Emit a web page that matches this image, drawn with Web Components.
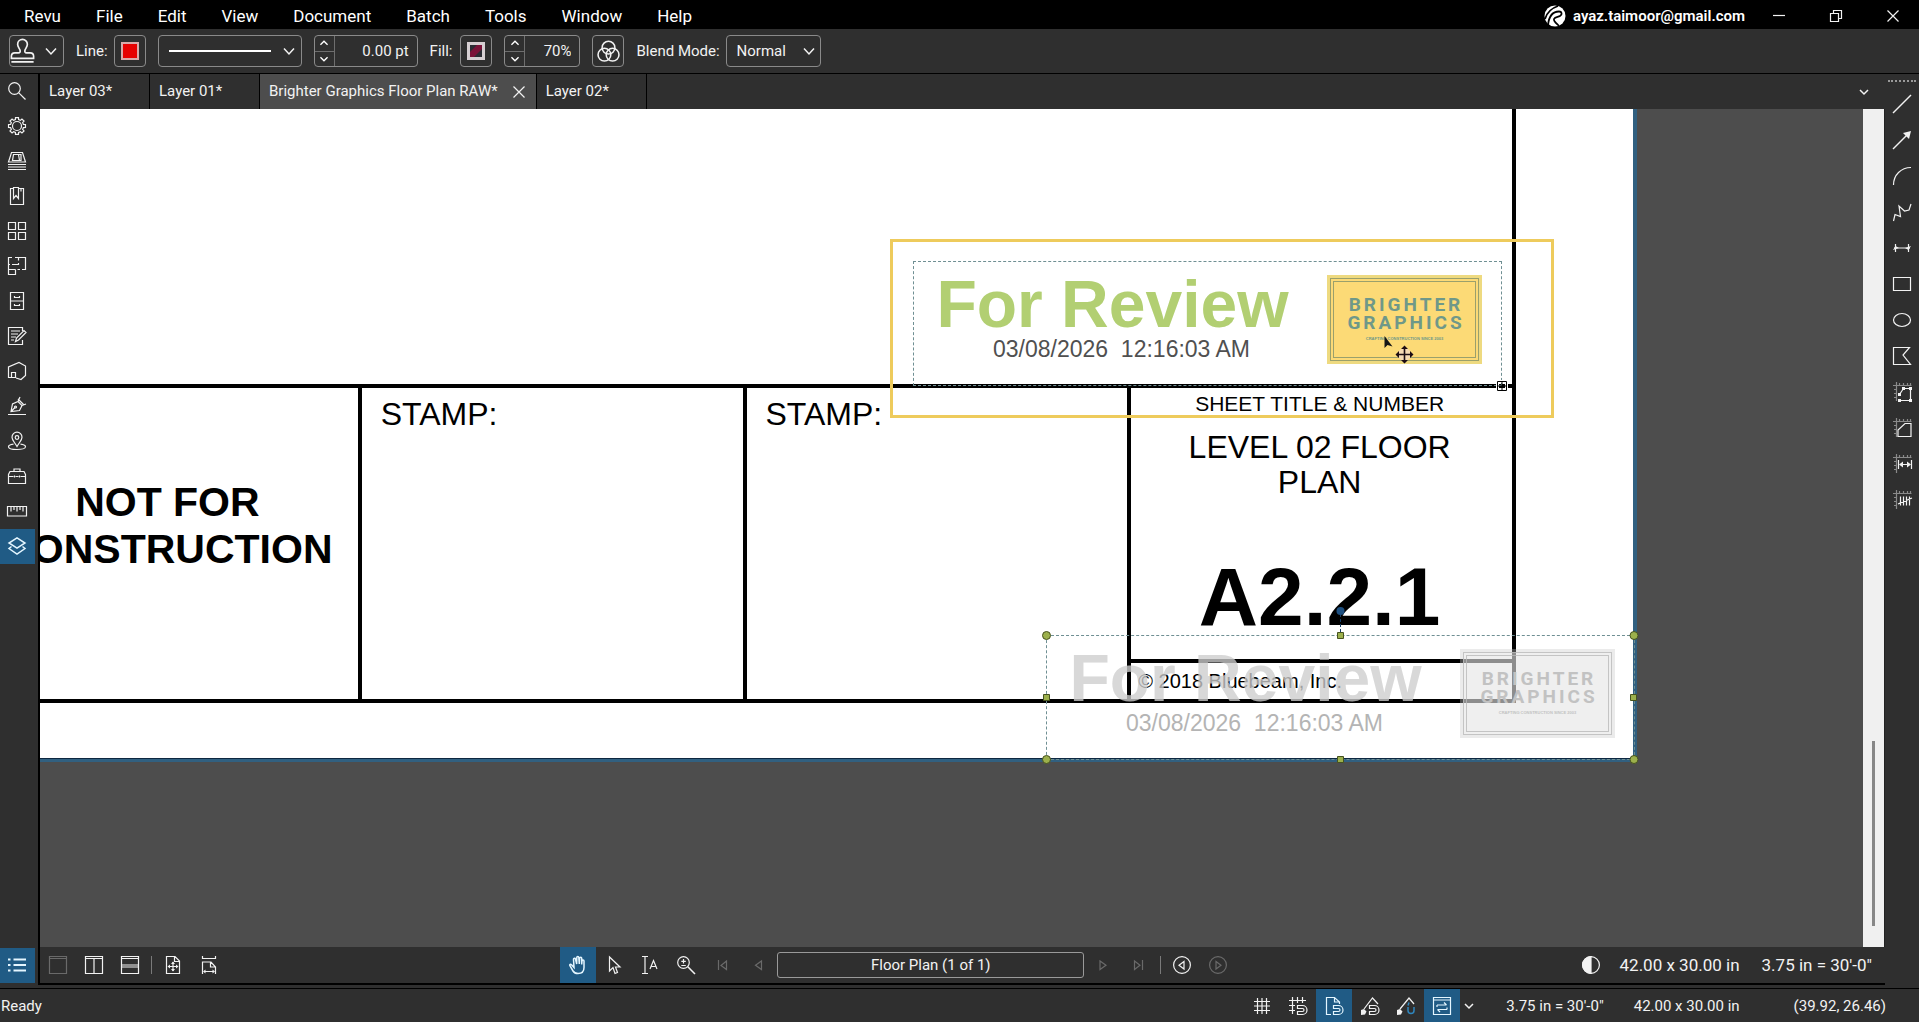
<!DOCTYPE html>
<html lang="en">
<head>
<meta charset="utf-8">
<meta name="viewport" content="width=device-width, initial-scale=1">
<title>Revu</title>
<style>
  html, body { margin: 0; height: 100%; background: #2f2f2f; }
  body { font-family: Roboto, "Liberation Sans", sans-serif; font-size: 15px; color: #f2f2f2; overflow: hidden; }
</style>
</head>
<body>
<revu-app></revu-app>
<script>
const gearPath = (() => {
  const pts = [];
  for (let i = 0; i < 8; i++) {
    const a = i * 45;
    for (const [d, r] of [[-14, 6.6], [-10, 8.6], [10, 8.6], [14, 6.6]]) {
      const t = (a + d) * Math.PI / 180;
      pts.push((9 + r * Math.sin(t)).toFixed(2) + ' ' + (9 - r * Math.cos(t)).toFixed(2));
    }
  }
  return 'M' + pts.join('L') + 'Z';
})();
const ticks = '<path stroke="#8a8a8a" d="M0 2.500h18.500M3.500 -1v19M6.500 0v2.500M10.500 0v2.500M14.500 0v2.500M17.500 0v2.500M1 6.500h2.500M1 10.500h2.500M1 14.500h2.500"/>';
const magnet = '<path d="M8.500 8.500h5a4.500 4.500 0 0 1 0 9h-5v-3h5a1.500 1.500 0 0 0 0-3h-5z"/>';

const ICONS = {
  search: '<circle cx="6.500" cy="6.500" r="5.800"/><path d="M10.800 10.800L17.500 17.500"/>',
  gear: `<path d="${gearPath}"/><circle cx="9" cy="9" r="4.500"/>`,
  thumbs: '<path d="M3.500 .5h11l3 9.500H.5zM5.500 2.500h7.500v6h-8.500zM10.500 2.500l1 6M0 12.500h18M0 15h18M0 17.500h18"/>',
  bookmark: '<path d="M6 1.500H2.500v16h13v-16H11M5.500 .5h5v11L8 8.500l-2.500 3zM13 1.500v3"/>',
  grid4: '<path d="M.5 .5h7v7h-7zM10.500 .5h7v7h-7zM.5 10.500h7v7h-7zM10.500 10.500h7v7h-7z"/>',
  plan: '<path d="M4 .5H.5v12h7M7.500 12.500v5h-7v-5M7 .5h10.500v12H14M10.500 .5v3M10.500 6v1.500H4M.5 7.500h1.500M9.500 12.500h2.500"/>',
  cabinet: '<path d="M2.500 .5h13v17h-13zM2.500 9h13M6.500 4v1.500h5V4M6.500 12v1.500h5V12"/>',
  markup: '<path d="M14.500 4V.5H.5v17h14V13M3 4h9M3 7h7M3 10h5M3 13h3M7.500 14.500l1-3.500 7.500-7.500 2 2-7.500 7.500z"/>',
  space: '<path d="M.5 14.500V5L11 .5 17.500 4v9.500L13 17.500 8 16M.5 14.500v1h7v-5h-4v5"/>',
  sign: '<path d="M0 17.500h18M3 14.500L4.500 7 10 4.500l4 4-2.500 5zM3 14.500l4-4M10 4.500L12 0M14 8.500l4-1.500M10 2l6 6"/><circle cx="7.500" cy="10" r="1"/>',
  place: '<path d="M9 14.500C6 9.500 4 8 4 5.200a5 5 0 0 1 10 0C14 8 12 9.500 9 14.500zM5.500 12.200C2.500 12.600.5 13.500.5 14.700c0 1.600 3.800 2.800 8.500 2.800s8.500-1.200 8.500-2.800c0-1.200-2-2.100-5-2.500"/><circle cx="9" cy="5.500" r="1.800"/>',
  toolbox: '<path d="M2 4.500h14l1.500 3v9H.5v-9zM6 4.500V2h6v2.500M.5 9.500h5M7.500 9.500h3M12.500 9.500h5M6.500 8.500v2M11.500 8.500v2"/>',
  ruler: '<path d="M-.5 4.500h19v9.500h-19zM3 5v4.500M6 5v3M9 5v4.500M12 5v3M15 5v4.500"/>',
  layers: '<path stroke-width="1.500" d="M9 .8l8 5.200-8 5.200L1 6zM3.500 9.500L1 11.500l8 5.700 8-5.700-2.500-2"/>',
  list: '<path stroke-width="2" d="M5.500 3.500H18M5.500 9H18M5.500 14.500H18M0 3.500h2.500M0 9h2.500M0 14.500h2.500"/>',
  line: '<path stroke-width="1.500" d="M0 18L18 0"/>',
  arrow: '<path stroke-width="1.500" d="M0 18L14 4"/><path fill="currentColor" stroke="none" d="M18 0L16 8 10 2z"/>',
  arc: '<path d="M.5 18C.5 8 8 .5 18 .5"/>',
  polyline: '<path d="M.5 18l1.500-6.500 5.500 2L6 3l5.500 5 4.500-1L18 1"/>',
  dimension: '<path d="M2.500 5v8M15.500 5v8M1 9h16"/><path fill="currentColor" stroke="none" d="M0 11l2.500-4 3.500 2zM18 7l-2.500 4-3.500-2z"/>',
  rect: '<path d="M.5 2.500h17v13H.5z"/>',
  ellipse: '<ellipse cx="9" cy="9" rx="8.500" ry="6.500"/>',
  polygon: '<path d="M.5 .5h16L10 8l7.500 9.500H.5z"/>',
  areaPoints: ticks + '<path d="M6.500 11.500L10.500 5.500h7v12H6.500"/><path fill="currentColor" stroke="none" d="M5 10h3v3H5zM9 4h3v3H9zM16 4h3v3h-3zM16 16h3v3h-3zM5 16h3v3H5z"/>',
  area: ticks + '<path d="M12 4.500h6v13H5V11z"/>',
  length: ticks + '<path d="M5.500 5v9M18.500 5v9M7 9.500h10"/><path fill="currentColor" stroke="none" d="M6 9.500l4-3v6zM18 9.500l-4-3v6z"/>',
  count: ticks + '<path d="M7.500 5.500v9M10.500 5.500v9M13.500 5.500v9M16.500 5.500v9M5 13l14-6"/>',
  single: '<path d="M.5 .5h17v17H.5zM.5 2.500h17"/>',
  splitV: '<path d="M.5 .5h17v17H.5zM.5 2.500h17M9 2.500v15"/>',
  splitH: '<path d="M.5 .5h17v17H.5zM.5 2.500h17M.5 9h17M.5 11h17"/>',
  fitPage: '<path d="M11 .5H2.500v17h13V5zM10.500 .5v5h5M4.500 10.500h9M9 6v9"/><path fill="currentColor" stroke="none" d="M3.500 10.500L6 8.500v4zM14.500 10.500l-2.500-2v4zM9 5.500l2 2.500H7zM9 15.500l2-2.500H7z"/>',
  fitWidth: '<path d="M2.500 0v2.500h13V0M2.500 18V6H11l4.500 5v7M10.500 6v5h5M4 15.500h10"/><path fill="currentColor" stroke="none" d="M3 15.500l2.500-2v4zM15 15.500l-2.500-2v4z"/>',
  hand: '<path stroke-width="1.500" d="M5 11.500L2.300 8.600c-.8-.9-2-.2-1.500.9L4 15c1 1.700 2.500 2.500 5 2.500 3.800 0 6-2.200 6-6V5c0-1.300-1.800-1.300-2 0l-.3 3.500V2.300c0-1.400-2-1.400-2.100 0L10.300 8 9.800 1.500c-.1-1.300-2-1.300-2 0L7.700 8 6.500 3c-.3-1.200-2.200-.9-2 .4z"/>',
  select: '<path d="M4.500 1v14l3.500-3.500 2 6 2.500-1-2-5.500h4.500z"/>',
  textSel: '<path d="M1 .5h6M4 .5v17M1 17.500h6M9 13l3.500-8.500L16 13M10 10.500h5"/>',
  zoom: '<circle cx="6.500" cy="6.500" r="5.800"/><path stroke-width="1.600" d="M10.800 10.800L18 18"/><path d="M6.500 3v4.500M4.300 5.300h4.500M4.300 9.500h4.500"/>',
  first: '<path d="M5.500 4v10M13.500 5v8.500l-5.500-4z"/>',
  prev: '<path d="M12.500 5v8.500l-6-4.300z"/>',
  next: '<path d="M6 5v8.500l6-4.300z"/>',
  last: '<path d="M4.500 5v8.500l5.500-4.300zM12.500 4v10"/>',
  back: '<circle cx="9" cy="9" r="8.400"/><path d="M11 5.500v7.500l-5-3.700z"/>',
  forward: '<circle cx="9" cy="9" r="8.400"/><path d="M7 5.500v7.500l5-3.700z"/>',
  contrast: '<circle cx="9" cy="9" r="8.400"/><path fill="currentColor" d="M9 .6a8.400 8.400 0 0 0 0 16.800z"/>',
  grid: '<path d="M4.500 1v16M9 1v16M13.500 1v16M1 4.500h16M1 9h16M1 13.500h16"/>',
  gridSnap: '<path d="M3.500 0v17M8.500 0v6M13.500 0v6M0 3.500h17M0 8.500h6M0 13.500h6"/>' + magnet,
  pageSnap: '<path d="M6 17.500H1.500V.5h8l5 4.500v2M9.500 .5V5h5"/>' + magnet,
  lineSnap: '<path d="M3 12L11.500 1 17 7"/><path fill="currentColor" stroke="none" d="M0 18V13l3-1 2.500 2.500-1.500 3z"/>' + magnet,
  contentSnap: '<path d="M3 12L12 1l5 6"/><path fill="currentColor" stroke="none" d="M0 18V13l3-1 2.500 2.500-1.500 3z"/><path stroke="#2f86bd" stroke-width="1.500" d="M11 10v3.500a3 3 0 0 0 6 0V10M12 5.500l-1 3"/>',
  sync: '<path d="M.5 .5h17v17H.5zM.5 3h17M4 8h9.500M11 5.500L13.500 8M14 12.500H4.500M7 15l-2.500-2.500M4 8v2M14 12.500v-2"/>',
  minimize: '<path d="M3 8.500h12"/>',
  restore: '<path d="M3.500 6.500h8v8h-8zM6.500 6V3.500h8v8H12"/>',
  close: '<path d="M3.500 3.500l11 11M14.500 3.500l-11 11"/>',
  chevron: '<path stroke-width="1.500" d="M4 6.500l5 5.500 5-5.500"/>',
  chevronSm: '<path stroke-width="1.500" d="M5 7l4 4 4-4"/>',
  stamp: '<path d="M1 12.500c0-1.500 1-2.500 2.500-2.500H6c1.200 0 1.600-1 1.200-2C6.600 6.500 5.500 5.400 5.500 3.800a3.500 3.500 0 0 1 7 0c0 1.600-1.100 2.700-1.700 4.200-.4 1 0 2 1.200 2h2.500c1.500 0 2.500 1 2.500 2.500V14H1zM1 16.500h16"/>',
  blend: '<circle cx="9" cy="6" r="5"/><circle cx="5.800" cy="11.500" r="5"/><circle cx="12.200" cy="11.500" r="5"/>'
};

const FOCUS = 'button:focus-visible,input:focus-visible,select:focus-visible{outline:1px solid #4aa3df;}';
function define(name, html, setup, observed = []) {
  const tpl = document.createElement('template');
  tpl.innerHTML = html;
  customElements.define(name, class extends HTMLElement {
    static get observedAttributes() { return observed; }
    constructor() {
      super();
      this.attachShadow({ mode: 'open' }).append(document.importNode(tpl.content, true));
    }
    connectedCallback() { if (setup && !observed.length) setup.call(this, this.shadowRoot); }
    attributeChangedCallback() { setup.call(this, this.shadowRoot); }
  });
}

/* A line icon; --icon-size sets its box. */
define('rv-icon', `
  <style>
    :host { display: inline-flex; flex: none; }
    svg { display: block; width: var(--icon-size, 18px); height: var(--icon-size, 18px); overflow: visible;
          fill: none; stroke: currentColor; stroke-width: 1.2; }
  </style>
  <svg viewBox="0 0 18 18" aria-hidden="true"></svg>`,
  function (root) { root.querySelector('svg').innerHTML = ICONS[this.getAttribute('name')] || ''; }, ['name']);

/* A flat icon button for rails and bars. */
define('rv-tool', `
  <style>
    :host { display: flex; flex: none; width: var(--tool-w, 36px); height: var(--tool-h, 36px); }
    button { flex: 1; display: flex; align-items: center; justify-content: center; margin: 0; padding: var(--tool-pad, 0);
             border: 0; background: none; color: #f2f2f2; }
    :host([active]) button { background: #205b85; color: #e4f6ff; }
    button:disabled { color: #6a6a6a; }
    ${FOCUS}
  </style>
  <button type="button"><rv-icon></rv-icon></button>`,
  function (root) {
    const b = root.querySelector('button');
    b.setAttribute('aria-label', this.getAttribute('label'));
    b.disabled = this.hasAttribute('off');
    root.querySelector('rv-icon').setAttribute('name', this.getAttribute('icon'));
  });

define('rv-titlebar', `
  <style>
    :host { display: flex; align-items: center; height: 29px; background: #000; color: #fff; }
    nav { display: flex; padding-left: 6px; flex: 1; }
    nav button { border: 0; margin: 0; padding: 3px 17px 0 18px; background: none; color: inherit; font: 17px/26px Roboto, sans-serif; }
    .account { display: flex; align-items: center; gap: 7px; padding-top: 2px; font-size: 15px; font-weight: 600; line-height: 26px; }
    .account svg { width: 22px; height: 22px; display: block; }
    .window { display: flex; padding: 3px 0 0 5px; margin-right: -2px; --tool-w: 57px; --tool-h: 26px; }
    ${FOCUS}
  </style>
  <nav>
    <button>Revu</button><button>File</button><button>Edit</button><button>View</button><button>Document</button>
    <button>Batch</button><button>Tools</button><button>Window</button><button>Help</button>
  </nav>
  <div class="account">
    <svg viewBox="0 0 22 22" aria-hidden="true">
      <circle cx="11" cy="11" r="10.500" fill="#fff"/>
      <path d="M4 20C5 11 9 6.500 15 6.500c3 0 3.500 3 1 4.500-2 1.200-5 .5-6 3-.7 2 2 4 5 7M1 14C3 7 8 3 14 1" fill="none" stroke="#000" stroke-width="1.800"/>
    </svg>
    <span>ayaz.taimoor@gmail.com</span>
  </div>
  <div class="window">
    <rv-tool icon="minimize" label="Minimize"></rv-tool>
    <rv-tool icon="restore" label="Restore"></rv-tool>
    <rv-tool icon="close" label="Close"></rv-tool>
  </div>`);

/* Number field with up and down buttons on its left. */
define('rv-spinner', `
  <style>
    :host { display: block; }
    .box { box-sizing: border-box; display: flex; height: 32px; border: 1px solid #8a8a8a; border-radius: 4px; overflow: hidden; }
    .steps { display: flex; flex-direction: column; width: 19px; border-right: 1px solid #6e6e6e; }
    .steps button { flex: 1; min-height: 0; padding: 0; border: 0; background: none; color: #fff; display: flex; align-items: center; justify-content: center; --icon-size: 16px; }
    .steps button:first-child { border-bottom: 1px solid #6e6e6e; }
    .steps button:first-child rv-icon { transform: rotate(180deg); }
    input { flex: 1; min-width: 0; border: 0; margin: 0; padding: 0 8px 0 0; background: none; color: #f2f2f2; text-align: right;
            font: 15px/30px Roboto, sans-serif; }
    ${FOCUS}
  </style>
  <div class="box">
    <div class="steps">
      <button type="button" aria-label="Increase"><rv-icon name="chevronSm"></rv-icon></button>
      <button type="button" aria-label="Decrease"><rv-icon name="chevronSm"></rv-icon></button>
    </div>
    <input type="text">
  </div>`,
  function (root) {
    const i = root.querySelector('input');
    i.value = this.getAttribute('value');
    i.setAttribute('aria-label', this.getAttribute('label'));
  });

define('rv-properties', `
  <style>
    :host { display: flex; align-items: center; gap: 12px; height: 44px; padding-left: 9px; border-bottom: 1px solid #000; background: #2f2f2f; }
    .field { display: flex; align-items: center; gap: 6px; }
    .fill { gap: 8px; }
    .btn, select { box-sizing: border-box; height: 32px; margin: 0; border: 1px solid #8a8a8a; border-radius: 4px; background: none; color: #f2f2f2; }
    .btn { display: flex; align-items: center; justify-content: center; padding: 0; width: 32px; }
    .stamp { width: 55px; gap: 7px; padding-right: 3px; }
    .stamp rv-icon:first-child { --icon-size: 25px; }
    .stamp rv-icon + rv-icon, .style rv-icon { --icon-size: 18px; }
    .style { width: 144px; gap: 9px; padding-left: 8px; }
    .style i { width: 102px; height: 2px; background: #fff; }
    .pick { position: relative; display: flex; }
    .pick rv-icon { position: absolute; right: 3px; top: 7px; --icon-size: 18px; pointer-events: none; }
    select { appearance: none; width: 95px; padding: 0 24px 0 10px; font: 15px/30px Roboto, sans-serif; }
    .swatch { width: 18px; height: 18px; }
    ${FOCUS}
  </style>
  <button class="btn stamp" type="button" aria-label="Stamp"><rv-icon name="stamp"></rv-icon><rv-icon name="chevron"></rv-icon></button>
  <div class="field"><label for="line">Line:</label>
    <button id="line" class="btn" type="button"><svg class="swatch" viewBox="0 0 18 18"><path d="M1 1h16v16H1z" fill="#e60000" stroke="#d8a9a9" stroke-width="2"/></svg></button></div>
  <button class="btn style" type="button" aria-label="Line style" aria-haspopup="listbox"><i></i><rv-icon name="chevron"></rv-icon></button>
  <rv-spinner style="width:104px" value="0.00 pt" label="Line width"></rv-spinner>
  <div class="field fill"><label for="fill">Fill:</label>
    <button id="fill" class="btn" type="button"><svg class="swatch" viewBox="0 0 18 18"><path d="M2 2h14v14H2z" fill="#2b2b33"/><path d="M2 16V11L11 2h5v4L6 16z" fill="#7a1238"/><path d="M1.500 1.500h15v15h-15z" fill="none" stroke="#d6cfd2" stroke-width="3"/></svg></button></div>
  <rv-spinner style="width:76px" value="70%" label="Opacity"></rv-spinner>
  <button class="btn" type="button" aria-label="Blend"><rv-icon name="blend" style="--icon-size:23px"></rv-icon></button>
  <div class="field"><label for="mode">Blend Mode:</label>
    <div class="pick"><select id="mode"><option>Normal</option><option>Multiply</option></select><rv-icon name="chevron"></rv-icon></div></div>`);

define('rv-tab', `
  <style>
    :host { box-sizing: border-box; flex: none; display: flex; align-items: center; gap: 12px; min-width: 110px; padding: 0 8px 0 9px; border-right: 1px solid #000; }
    :host([active]) { background: #4d4d4d; }
    .label { border: 0; margin: 0; padding: 0; background: none; color: #f2f2f2; font: 15px/35px Roboto, sans-serif; white-space: nowrap; }
    rv-tool { display: none; --tool-w: 18px; --tool-h: 20px; }
    :host([active]) rv-tool { display: flex; }
    ${FOCUS}
  </style>
  <button class="label" type="button" role="tab"><slot></slot></button><rv-tool icon="close" label="Close tab"></rv-tool>`);

define('rv-tabs', `
  <style>
    :host { display: flex; height: 35px; background: #2f2f2f; }
    .list { display: flex; flex: 1; min-width: 0; }
    .more { --tool-w: 42px; --tool-h: 35px; }
  </style>
  <div class="list" role="tablist">
    <rv-tab>Layer 03*</rv-tab><rv-tab>Layer 01*</rv-tab><rv-tab active>Brighter Graphics Floor Plan RAW*</rv-tab><rv-tab>Layer 02*</rv-tab>
  </div>
  <rv-tool class="more" icon="chevronSm" label="More tabs"></rv-tool>`);

/* The review stamp; tone="ghost" is the faded copy left behind while dragging. */
define('review-stamp', `
  <style>
    :host { box-sizing: border-box; display: flex; width: 589px; height: 125px; border: 1px dashed var(--edge, #6f8f93);
            font-family: "Liberation Sans", Arial, sans-serif; --title: #b2cf72; --date: #505050; }
    .words { width: 413px; padding: 12px 12px 0 0; box-sizing: border-box; text-align: center; white-space: pre; }
    .title { font-size: 66px; line-height: 60px; font-weight: 700; padding-right: 4px; color: var(--title); }
    .date { font-size: 23px; line-height: 30px; padding-left: 14px; color: var(--date); }
    .logo { box-sizing: border-box; width: 155px; height: 89px; margin-top: 13px; padding: 3px; background: var(--rim, #eeda80); }
    .plate { box-sizing: border-box; height: 83px; border: 4px double var(--rule, #9aa06c); background: var(--plate, #fcda76);
             display: flex; flex-direction: column; align-items: center; padding-top: 14px; color: var(--ink, #6f9889); }
    .brand { font: 700 19px/18px Roboto, sans-serif; letter-spacing: 3px; padding-left: 3px; }
    .tag { font: 700 4px/14px "Liberation Sans", sans-serif; white-space: nowrap; }
    :host([tone="ghost"]) { --title: rgba(205,205,205,.78); --date: #b4b4b4; --rim: rgba(200,200,200,.36); --plate: rgba(245,245,245,.4);
      --rule: rgba(185,185,185,.8); --ink: #c2c2c2; }
  </style>
  <div class="words"><div class="title">For Review</div><div class="date">03/08/2026  12:16:03 AM</div></div>
  <div class="logo"><div class="plate"><div class="brand">BRIGHTER</div><div class="brand">GRAPHICS</div><div class="tag">CRAFTING CONSTRUCTION SINCE 2003</div></div></div>`);

/* The visible corner of the zoomed drawing sheet, with the markups floating over it. */
define('plan-sheet', `
  <style>
    :host { position: relative; flex: none; box-sizing: border-box; display: block; width: 1597px; height: 653px;
            background: #fff; color: #000; border: solid #316080; border-width: 0 4px 4px 0; font-family: "Liberation Sans", Arial, sans-serif; }
    .frame { display: flex; flex-direction: column; box-sizing: border-box; height: 594px; margin: 0 117px 0 -67px; border: solid #000; border-width: 0 4px 4px; }
    .space { flex: 1; }
    .block { display: grid; grid-template-columns: repeat(4, 1fr); gap: 4px; height: 311px; border-top: 4px solid #000; background: #000; }
    .cell { background: #fff; }
    .stamp { padding: 8px 19px; font-size: 32px; line-height: 36px; }
    .notfor { padding-top: 91px; font-size: 41px; line-height: 47px; font-weight: 700; text-align: center; white-space: nowrap; display: flex; flex-direction: column; align-items: center; }
    .title { display: flex; flex-direction: column; text-align: center; }
    .kind { font-size: 21px; line-height: 32px; padding-right: 4px; }
    .name { font-size: 32px; line-height: 35px; padding: 10px 52px 0 48px; }
    .number { font-size: 82px; line-height: 84px; font-weight: 700; margin: auto 0 20px; padding-right: 4px; }
    .copy { border-top: 4px solid #000; padding-left: 7px; font-size: 20px; line-height: 36px; text-align: left; }
    review-stamp, .highlight, .marks { position: absolute; }
    .ghost { left: 1006px; top: 526px; }
    .moving { left: 873px; top: 152px; }
    .highlight { box-sizing: border-box; left: 850px; top: 130px; width: 664px; height: 179px; border: 3px solid #eecb5c; }
    .marks { left: 0; top: 0; width: 1597px; height: 653px; overflow: visible; }
  </style>
  <div class="frame">
    <div class="space"></div>
    <div class="block">
      <div class="cell notfor"><span>NOT FOR</span><span>CONSTRUCTION</span></div>
      <div class="cell stamp">STAMP:</div>
      <div class="cell stamp">STAMP:</div>
      <div class="cell title">
        <div class="kind">SHEET TITLE &amp; NUMBER</div>
        <div class="name">LEVEL 02 FLOOR PLAN</div>
        <div class="number">A2.2.1</div>
        <div class="copy">© 2018 Bluebeam, Inc.</div>
      </div>
    </div>
  </div>
  <review-stamp class="ghost" tone="ghost"></review-stamp>
  <review-stamp class="moving"></review-stamp>
  <div class="highlight"></div>
  <svg class="marks" viewBox="0 0 1597 653" aria-hidden="true">
    <path d="M0 649.500h1594" stroke="#0d2740"/>
    <g fill="#9cb04c" stroke="#46521f">
      <path d="M1297.500 523.500h6v6h-6zM1297.500 647.500h6v6h-6zM1003.500 585.500h6v6h-6zM1590.500 585.500h6v6h-6z"/>
      <circle cx="1006.500" cy="526.500" r="4"/><circle cx="1594" cy="526.500" r="4"/>
      <circle cx="1006.500" cy="650.500" r="4"/><circle cx="1594" cy="650.500" r="4"/>
    </g>
    <path d="M1300.500 505v18" stroke="#163f68" stroke-dasharray="3 2"/>
    <circle cx="1300.500" cy="502" r="4" fill="#1d4f80"/>
    <path d="M1457.500 272.500h9v9h-9z" fill="none" stroke="#fff" stroke-width="3"/>
    <path d="M1457.500 272.500h9v9h-9zM1462 273v8M1458 277h8" fill="none" stroke="#000"/>
    <path d="M1344.500 227v12l3-3 5 1.500z" fill="#161616"/>
    <g transform="translate(1364.500 245.500)">
      <circle r="6.500" fill="#f6d9b4"/>
      <path d="M-7 0H7M0-7V7" stroke="#1c0c14" stroke-width="1.600"/>
      <path d="M-9 0l3.500-3.500v7zM9 0L5.500-3.500v7zM0-9l3.500 3.500h-7zM0 9l3.500-3.500h-7z" fill="#1c0c14"/>
    </g>
  </svg>`);

define('rv-canvas', `
  <style>
    :host { display: flex; flex: 1; min-height: 0; overflow: hidden; background: #4d4d4d; }
    .view { flex: 1; min-width: 0; overflow: hidden; display: flex; align-items: flex-start; }
    .bar { flex: none; width: 21px; display: grid; grid-template-rows: 632fr 185fr 21fr; justify-items: center; background: #f0f0f0; border-right: 1px solid #222; }
    .bar i { grid-row: 2; width: 3px; background: #878787; }
  </style>
  <div class="view"><slot></slot></div>
  <div class="bar"><i></i></div>`);

define('rv-navbar', `
  <style>
    :host { display: flex; justify-content: space-between; align-items: center; height: 36px; background: #2f2f2f; --tool-pad: 0 1px 0 0; }
    div { display: flex; align-items: center; }
    hr { width: 1px; height: 18px; margin: 0 3px; border: 0; background: #7a7a7a; }
    input { box-sizing: border-box; width: 307px; height: 26px; margin: 0 1px; padding: 0; border: 1px solid #9a9a9a; border-radius: 3px; background: none;
            color: #f2f2f2; font: 15px/24px Roboto, sans-serif; text-align: center; }
    .center { padding-right: 12px; }
    .info { gap: 22px; padding-right: 13px; font-size: 17px; }
    .info rv-icon { margin-right: -2px; }
    ${FOCUS}
  </style>
  <div>
    <rv-tool icon="single" label="Unsplit" off></rv-tool>
    <rv-tool icon="splitV" label="Split vertical"></rv-tool>
    <rv-tool icon="splitH" label="Split horizontal"></rv-tool>
    <hr>
    <rv-tool icon="fitPage" label="Fit page"></rv-tool>
    <rv-tool icon="fitWidth" label="Fit width"></rv-tool>
  </div>
  <div class="center">
    <rv-tool icon="hand" label="Pan" active></rv-tool>
    <rv-tool icon="select" label="Select"></rv-tool>
    <rv-tool icon="textSel" label="Select text"></rv-tool>
    <rv-tool icon="zoom" label="Zoom"></rv-tool>
    <rv-tool icon="first" label="First page" off></rv-tool>
    <rv-tool icon="prev" label="Previous page" off></rv-tool>
    <input type="text" aria-label="Page" value="Floor Plan (1 of 1)">
    <rv-tool icon="next" label="Next page" off></rv-tool>
    <rv-tool icon="last" label="Last page" off></rv-tool>
    <hr>
    <rv-tool icon="back" label="Previous view"></rv-tool>
    <rv-tool icon="forward" label="Next view" off></rv-tool>
  </div>
  <div class="info"><rv-icon name="contrast"></rv-icon><span>42.00 x 30.00 in</span><span>3.75 in = 30'-0"</span></div>`);

define('rv-rail', `
  <style>
    :host { box-sizing: border-box; display: flex; flex-direction: column; flex: none; background: #2f2f2f; }
    ::slotted([last]) { margin-top: auto; }
  </style><slot></slot>`);

define('rv-status', `
  <style>
    :host { display: flex; align-items: center; justify-content: space-between; height: 33px; border-top: 1px solid #000; background: #2f2f2f; --tool-h: 33px; }
    .right, .tools { display: flex; align-items: center; }
    .right { padding-right: 33px; gap: 30px; }
    .ready { padding-left: 1px; }
    .chev { --tool-w: 14px; }
    .tools { margin-right: 2px; }
    .pos { margin-left: 24px; }
  </style>
  <span class="ready">Ready</span>
  <div class="right">
    <div class="tools">
      <rv-tool icon="grid" label="Show grid"></rv-tool>
      <rv-tool icon="gridSnap" label="Snap to grid"></rv-tool>
      <rv-tool icon="pageSnap" label="Snap to page" active></rv-tool>
      <rv-tool icon="lineSnap" label="Snap to content"></rv-tool>
      <rv-tool icon="contentSnap" label="Snap to markup"></rv-tool>
      <rv-tool icon="sync" label="Sync views" active></rv-tool>
      <rv-tool class="chev" icon="chevronSm" label="Sync options"></rv-tool>
    </div>
    <span>3.75 in = 30'-0"</span><span>42.00 x 30.00 in</span><span class="pos">(39.92, 26.46)</span>
  </div>`);

define('revu-app', `
  <style>
    :host { display: flex; flex-direction: column; height: 100vh; min-height: 700px; }
    main { flex: 1; min-height: 0; display: flex; background: #2f2f2f; }
    .left { width: 38px; margin-bottom: 5px; --tool-w: 35px; --tool-h: 35px; --tool-pad: 0 1px 1px 0; }
    .center { flex: 1; min-width: 0; display: flex; flex-direction: column; margin-bottom: 3px; border-left: 2px solid #000; border-bottom: 2px solid #000; }
    .right { width: 34px; padding-top: 6px; }
    .right rv-tool { --tool-w: 34px; --tool-h: 36px; }
    .grip { display: block; height: 0; margin: 0 3px 4px 3px; border-top: 2px dotted #9a9a9a; }
  </style>
  <rv-titlebar></rv-titlebar>
  <rv-properties></rv-properties>
  <main>
    <rv-rail class="left"></rv-rail>
    <div class="center">
      <rv-tabs></rv-tabs>
      <rv-canvas><plan-sheet></plan-sheet></rv-canvas>
      <rv-navbar></rv-navbar>
    </div>
    <rv-rail class="right"><span class="grip"></span></rv-rail>
  </main>
  <rv-status></rv-status>`,
  function (root) {
    const add = (rail, icon, label, attr) => {
      const t = document.createElement('rv-tool');
      t.setAttribute('icon', icon);
      t.setAttribute('label', label);
      (attr || []).forEach(a => t.setAttribute(a, ''));
      rail.append(t);
    };
    const left = root.querySelector('.left'), right = root.querySelector('.right');
    [['search', 'Search'], ['gear', 'Properties'], ['thumbs', 'Sets'], ['bookmark', 'Bookmarks'], ['grid4', 'Thumbnails'],
     ['plan', 'Spaces'], ['cabinet', 'File access'], ['markup', 'Markups'], ['space', '3D model'], ['sign', 'Signatures'],
     ['place', 'Places'], ['toolbox', 'Tool chest'], ['ruler', 'Measurements'], ['layers', 'Layers', ['active']],
     ['list', 'Markups list', ['active', 'last']]].forEach(a => add(left, ...a));
    [['line', 'Line'], ['arrow', 'Arrow'], ['arc', 'Arc'], ['polyline', 'Polyline'], ['dimension', 'Dimension'], ['rect', 'Rectangle'],
     ['ellipse', 'Ellipse'], ['polygon', 'Polygon'], ['areaPoints', 'Polylength'], ['area', 'Area'], ['length', 'Length'],
     ['count', 'Count']].forEach(a => add(right, ...a));
  });
</script>
</body>
</html>
